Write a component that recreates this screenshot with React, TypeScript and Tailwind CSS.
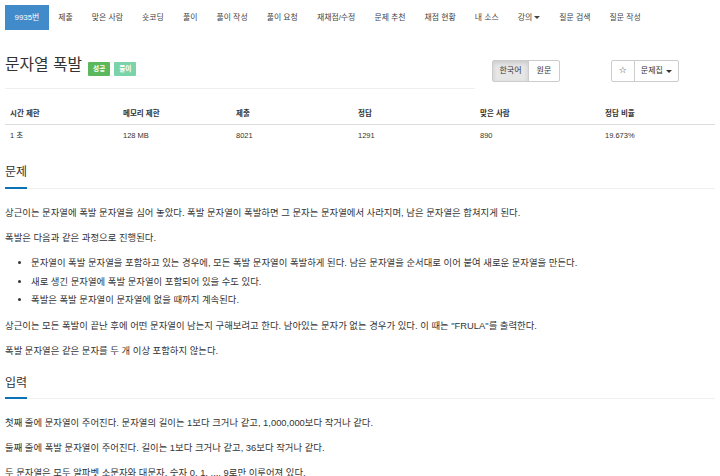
export default function App() {
  const nav = [
    "제출",
    "맞은 사람",
    "숏코딩",
    "풀이",
    "풀이 작성",
    "풀이 요청",
    "재채점/수정",
    "문제 추천",
    "채점 현황",
    "내 소스",
  ];
  const nav2 = ["질문 검색", "질문 작성"];
  const cols = [
    ["시간 제한", "1 초"],
    ["메모리 제한", "128 MB"],
    ["제출", "8021"],
    ["정답", "1291"],
    ["맞은 사람", "890"],
    ["정답 비율", "19.673%"],
  ];
  return (
    <div className="w-[720px] h-[476px] overflow-hidden bg-white text-[#333] font-['Liberation_Sans','Noto_Sans_CJK_KR',sans-serif]">
      {/* nav */}
      <nav className="flex pl-[5px] pt-[5px] h-[30px] text-[7.9px] text-[#444]">
        <a className="bg-[#428bca] text-white px-[9.5px] h-[25px] flex items-center">9935번</a>
        {nav.map((n) => (
          <a key={n} className="px-[9.5px] h-[25px] flex items-center whitespace-nowrap">
            {n}
          </a>
        ))}
        <a className="px-[9.5px] h-[25px] flex items-center whitespace-nowrap">
          강의
          <span className="ml-[2px] w-0 h-0 border-t-[3px] border-x-[3px] border-x-transparent border-t-[#444]" />
        </a>
        {nav2.map((n) => (
          <a key={n} className="px-[9.5px] h-[25px] flex items-center whitespace-nowrap">
            {n}
          </a>
        ))}
      </nav>

      {/* title row */}
      <div className="flex">
        <div className="w-[480px] px-[5px]">
          <div className="flex items-start mt-[24px] h-[21px]">
            <h1 className="text-[15.8px] leading-[21px] font-normal whitespace-nowrap">문자열 폭발</h1>
            <span className="ml-[6px] mt-[8px] h-[14px] px-[5px] flex items-center bg-[#5cb85c] text-white text-[6.6px] font-bold rounded-[1px]">
              성공
            </span>
            <span className="ml-[4px] mt-[8px] h-[14px] px-[5px] flex items-center bg-[#7bd3a9] text-white text-[6.6px] font-bold rounded-[1px]">
              풀이
            </span>
          </div>
          <div className="mt-[13px] h-px bg-[#eee]" />
        </div>
        <div className="flex items-start pt-[30px] pl-[12px] text-[8px]">
          <div className="flex h-[22px] border border-[#ccc] rounded-[2px]">
            <span className="px-[6.5px] flex items-center bg-[#e6e6e6] shadow-[inset_0_2px_4px_rgba(0,0,0,0.125)] border-r border-[#ccc]">
              한국어
            </span>
            <span className="px-[7.5px] flex items-center">원문</span>
          </div>
          <div className="ml-[51px] flex h-[22px] border border-[#ccc] rounded-[2px]">
            <span className="w-[23px] flex items-center justify-center border-r border-[#ccc] text-[9px] font-['DejaVu_Sans',sans-serif]">
              ☆
            </span>
            <span className="px-[6px] flex items-center">
              문제집
              <span className="ml-[3px] w-0 h-0 border-t-[3px] border-x-[3px] border-x-transparent border-t-[#333]" />
            </span>
          </div>
        </div>
      </div>

      {/* table */}
      <div className="mx-[5px] mt-[15px] grid grid-cols-[113px_113px_122px_122px_125px_1fr] text-[7.5px]">
        {cols.map(([h]) => (
          <div key={h} className="px-[5px] pt-[5px] pb-[5px] leading-[10px] font-bold border-b border-[#ddd]">
            {h}
          </div>
        ))}
        {cols.map(([h, v]) => (
          <div key={h + "v"} className="px-[5px] py-[6px] leading-[10px]">
            {v}
          </div>
        ))}
      </div>

      {/* 문제 */}
      <section className="mx-[5px] mt-[17px]">
        <div className="flex border-b border-[#f0f0f0]">
          <h2 className="text-[12px] leading-[16px] pb-[7px] border-b-2 border-[#0b72b5] -mb-px font-normal">문제</h2>
        </div>
        <div className="mt-[15px] text-[9.4px]">
          <p className="leading-[18px] mb-[7px]">
            상근이는 문자열에 폭발 문자열을 심어 놓았다. 폭발 문자열이 폭발하면 그 문자는 문자열에서 사라지며, 남은 문자열은 합쳐지게 된다.
          </p>
          <p className="leading-[18px] mb-[7px]">폭발은 다음과 같은 과정으로 진행된다.</p>
          <ul className="list-disc pl-[26px] mb-[7px]">
            <li className="leading-[18.5px]">
              문자열이 폭발 문자열을 포함하고 있는 경우에, 모든 폭발 문자열이 폭발하게 된다. 남은 문자열을 순서대로 이어 붙여 새로운 문자열을 만든다.
            </li>
            <li className="leading-[18.5px]">새로 생긴 문자열에 폭발 문자열이 포함되어 있을 수도 있다.</li>
            <li className="leading-[18.5px]">폭발은 폭발 문자열이 문자열에 없을 때까지 계속된다.</li>
          </ul>
          <p className="leading-[18px] mb-[7px]">
            상근이는 모든 폭발이 끝난 후에 어떤 문자열이 남는지 구해보려고 한다. 남아있는 문자가 없는 경우가 있다. 이 때는 "FRULA"를 출력한다.
          </p>
          <p className="leading-[18px] mb-[7px]">폭발 문자열은 같은 문자를 두 개 이상 포함하지 않는다.</p>
        </div>
      </section>

      {/* 입력 */}
      <section className="mx-[5px] mt-[15px]">
        <div className="flex border-b border-[#f0f0f0]">
          <h2 className="text-[12px] leading-[16px] pb-[6px] border-b-2 border-[#0b72b5] -mb-px font-normal">입력</h2>
        </div>
        <div className="mt-[15px] text-[9.4px]">
          <p className="leading-[18px] mb-[7px]">
            첫째 줄에 문자열이 주어진다. 문자열의 길이는 1보다 크거나 같고, 1,000,000보다 작거나 같다.
          </p>
          <p className="leading-[18px] mb-[7px]">
            둘째 줄에 폭발 문자열이 주어진다. 길이는 1보다 크거나 같고, 36보다 작거나 같다.
          </p>
          <p className="leading-[18px] mb-[7px]">
            두 문자열은 모두 알파벳 소문자와 대문자, 숫자 0, 1, ..., 9로만 이루어져 있다.
          </p>
        </div>
      </section>
    </div>
  );
}
